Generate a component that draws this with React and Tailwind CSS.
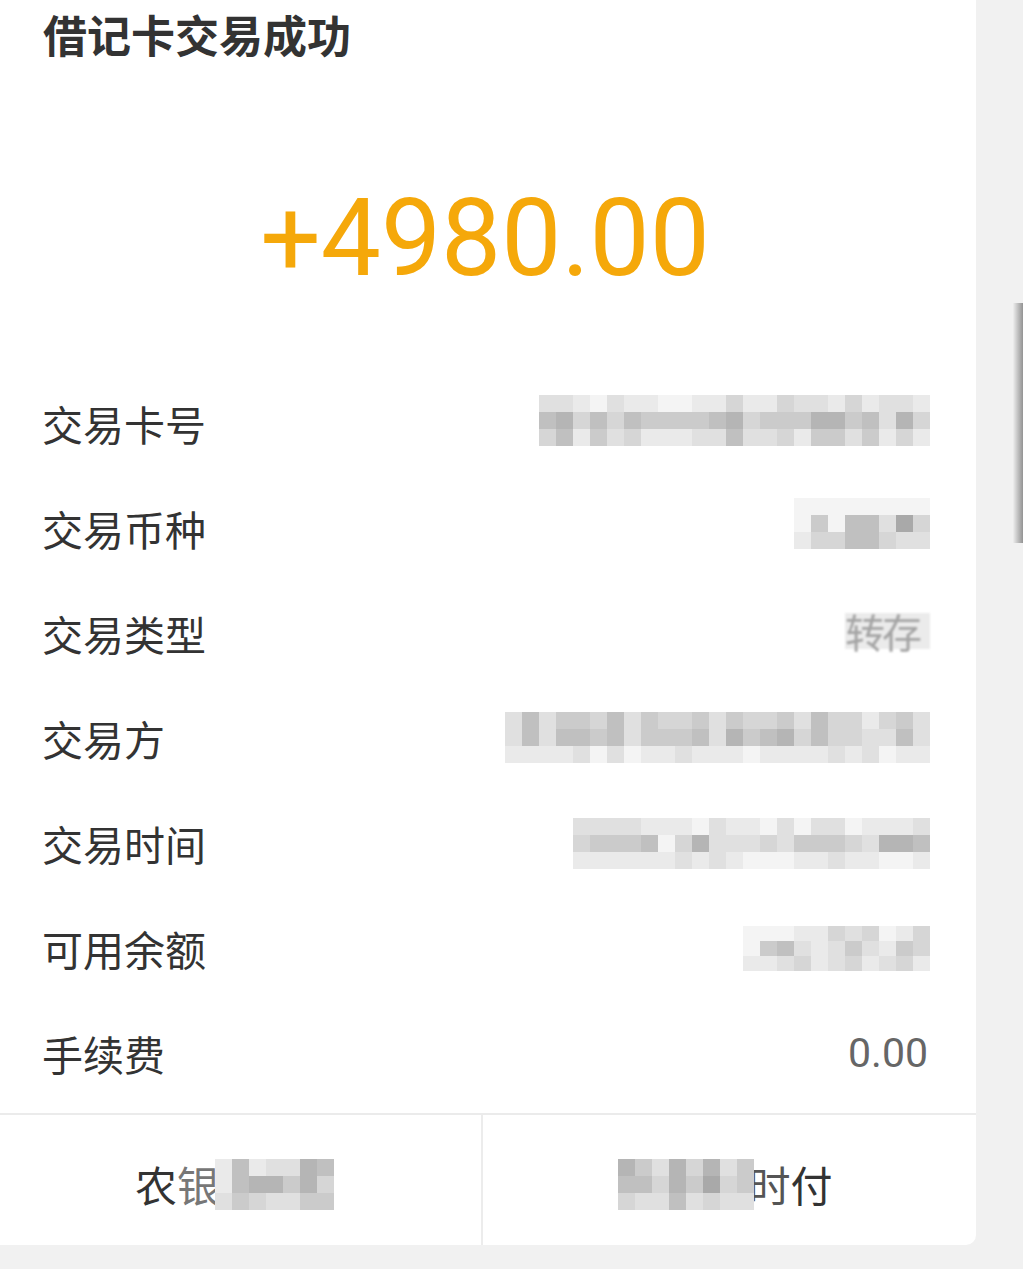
import React from "react";

const P = [
  "bg-[#f4f4f4]",
  "bg-[#eaeaea]",
  "bg-[#e0e0e0]",
  "bg-[#d6d6d6]",
  "bg-[#cbcbcb]",
  "bg-[#c0c0c0]",
  "bg-[#b5b5b5]",
  "bg-[#a9a9a9]",
];

const CJK = { fontFamily: '"Noto Sans CJK SC", "Noto Sans", sans-serif' };

function Mosaic({ rows, cell = "w-[17px] h-[17px]", className = "" }) {
  return (
    <div className={"flex flex-col blur-[0.6px] " + className}>
      {rows.map((r, i) => (
        <div key={i} className="flex">
          {[...r].map((c, j) => (
            <div key={j} className={P[Number(c)] + " " + cell} />
          ))}
        </div>
      ))}
    </div>
  );
}

const rowsData = [
  {
    label: "交易卡号",
    value: (
      <Mosaic
        className="mb-[7px]"
        rows={[
          "22102110011311322131221",
          "56353544445634446645263",
          "35142311122522314424131",
        ]}
      />
    ),
  },
  {
    label: "交易币种",
    value: (
      <Mosaic
        className="mb-[11px]"
        rows={["00000000", "04055273", "13355322"]}
      />
    ),
  },
  {
    label: "交易类型",
    value: (
      <div className="mb-[6px] w-[85px] h-[36px] bg-[#ebebeb] text-[#a4a4a4] text-[40px] leading-[36px] blur-[0.8px] tracking-[-3px] whitespace-nowrap">
        转存
      </div>
    ),
  },
  {
    label: "交易方",
    value: (
      <Mosaic
        className="mt-[-3px]"
        rows={[
          "2524435243342433425331342",
          "2525545244452645635332252",
          "1111202011211101111212011",
        ]}
      />
    ),
  },
  {
    label: "交易时间",
    value: (
      <Mosaic
        rows={[
          "222211102110202201112",
          "344450362223244432665",
          "111111212100011211001",
        ]}
      />
    ),
  },
  {
    label: "可用余额",
    value: (
      <Mosaic
        cell="w-[17px] h-[15px]"
        rows={["00011323013", "04521242143", "11231231231"]}
      />
    ),
  },
  {
    label: "手续费",
    value: (
      <span
        className="text-[41px] text-[#666666] leading-none mr-[2px]"
        style={{ fontFamily: "Roboto, sans-serif" }}
      >
        0.00
      </span>
    ),
  },
];

export default function App() {
  return (
    <div className="relative w-[1023px] h-[1269px] bg-[#f1f1f1] overflow-hidden flex" style={CJK}>
      <div className="w-[976px] h-[1245px] bg-white rounded-br-[10px] flex flex-col">
        <div className="pl-[43px] pt-[12px] h-[56px] text-[44px] leading-[44px] font-bold text-[#333333]">
          借记卡交易成功
        </div>
        <div
          className="mt-[129px] h-[107px] text-[107px] leading-[107px] text-[#f5a80a] text-center pr-[6px]"
          style={{ fontFamily: "Roboto, sans-serif" }}
        >
          +4980.00
        </div>
        <div className="mt-[79px] flex flex-col">
          {rowsData.map((r) => (
            <div key={r.label} className="h-[105px] flex items-center justify-between pl-[42px] pr-[46px]">
              <span className="text-[41px] text-[#333333] leading-none">{r.label}</span>
              {r.value}
            </div>
          ))}
        </div>
        <div className="mt-[7px] h-[2px] bg-[#ebebeb]" />
        <div className="flex-1 flex">
          <div className="w-[483px] flex items-center justify-center border-r-2 border-[#ececec] pr-[12px] pt-[8px]">
            <span className="text-[42px] text-[#333333] leading-none">农</span>
            <span className="relative flex items-center">
              <span className="text-[42px] text-[#777777] leading-none">银</span>
              <Mosaic
                className="ml-[-4px]"
                rows={["1512265", "1566463", "2432244"]}
              />
            </span>
          </div>
          <div className="flex-1 flex items-center justify-center pr-[8px] pt-[8px]">
            <Mosaic rows={["64263624", "55364734", "32252322"]} />
            <span className="text-[42px] text-[#555555] leading-none ml-[-6px]">时</span>
            <span className="text-[42px] text-[#333333] leading-none">付</span>
          </div>
        </div>
      </div>
      <div className="absolute left-[1013px] top-[303px] w-[10px] h-[240px] bg-gradient-to-r from-[#eeeeee] to-[#7c7c7c] opacity-80" />
    </div>
  );
}
